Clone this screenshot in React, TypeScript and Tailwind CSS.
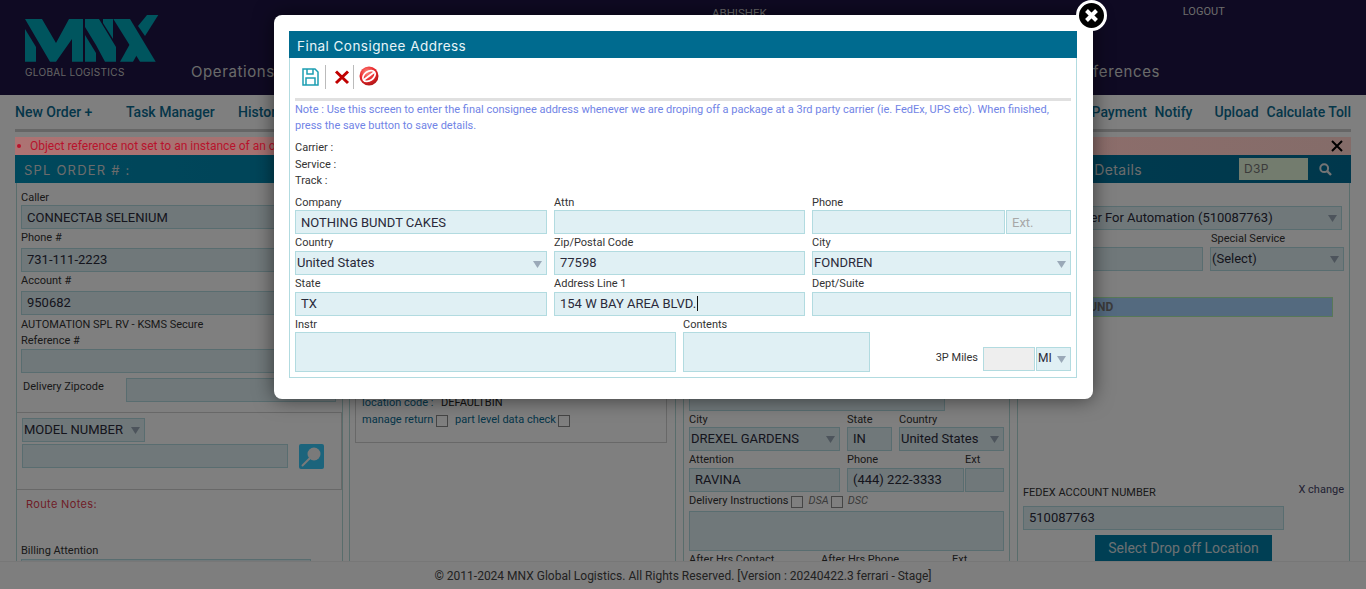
import React from "react";

const roboto = "font-['Roboto',sans-serif]";
const tech = "font-['Inter',sans-serif]";

function Arrow() {
  return (
    <svg width="9" height="7" viewBox="0 0 9 7" className="ml-auto shrink-0 mt-[1px]">
      <path d="M0 0h9L4.5 7z" fill="#9aa9b8" />
    </svg>
  );
}

function Field({ children, className = "", h = "h-[24px]" }: { children?: React.ReactNode; className?: string; h?: string }) {
  return (
    <div className={`${h} flex items-center border border-[#b2dbe0] bg-[#e0f0f4] pl-[5px] text-[13px] text-[#2a2a3a] whitespace-nowrap overflow-hidden ${className}`}>
      {children}
    </div>
  );
}

function Select({ children, className = "" }: { children?: React.ReactNode; className?: string }) {
  return (
    <div className={`h-[24px] flex items-center border border-[#b2dbe0] bg-[#e0f0f4] pl-[1px] pr-[4px] text-[13px] text-[#2a2a3a] whitespace-nowrap overflow-hidden ${className}`}>
      <span className="pb-[1px]">{children}</span>
      <Arrow />
    </div>
  );
}

function Label({ children, className = "", h = "h-[17px]" }: { children: React.ReactNode; className?: string; h?: string }) {
  return <div className={`${h} flex items-center text-[11px] text-[#333] whitespace-nowrap ${className}`}>{children}</div>;
}

function Check() {
  return <span className="inline-block w-[12px] h-[12px] shrink-0 border border-[#8a8a8a] bg-white" />;
}

function Logo() {
  return (
    <svg width="134" height="48" viewBox="0 0 134 48" className="block">
      <g fill="#00aabd">
        <polygon points="0,14 11,32 11,46.7 0,46.7" />
        <polygon points="0,4 17,4 31,28 44,4 58,4 58,46.7 47,46.7 47,24 31,46.7 25,46.7" />
        <polygon points="60,4 74,4 91,32 91,46.7 80,46.7 71,30 60,12" />
        <polygon points="60,20 71,38 71,46.7 60,46.7" />
        <polygon points="78,4 88,4 88,24 78,8" />
        <polygon points="88.3,4 105,4 130.7,46.7 115,46.7" />
        <polygon points="122,0 133.3,0 120,21 113,11" />
        <polygon points="95,46.7 108,46.7 117,31 110,20" />
      </g>
    </svg>
  );
}

function SearchGlass() {
  return (
    <svg width="25" height="25" viewBox="0 0 25 25" className="block">
      <rect width="25" height="25" rx="2" fill="#38c8f8" />
      <circle cx="15" cy="10" r="6.5" fill="#f4f4f4" />
      <path d="M10.5 14.5L3.5 21.5" stroke="#f4f4f4" strokeWidth="2" strokeLinecap="round" />
    </svg>
  );
}

export default function App() {
  return (
    <div className={`relative h-[589px] w-[1366px] overflow-hidden bg-white flex flex-col ${roboto}`}>
      {/* header */}
      <header className="h-[95px] shrink-0 bg-[#1e1446] flex">
        <div className="w-[191px] shrink-0 pl-[25px] pt-[15px]">
          <Logo />
          <div className={`mt-[2px] text-[10px] tracking-[0.3px] text-[#c8c8c8] ${tech}`}>GLOBAL LOGISTICS</div>
        </div>
        <div className="flex-1 flex flex-col">
          <div className="flex h-[24px] items-center text-[#d8d8d8]">
            <span className="ml-[521px] mt-[3px] text-[11.5px]">ABHISHEK</span>
            <span className="ml-[416px] text-[11px]">LOGOUT</span>
          </div>
          <div className={`mt-[37px] flex justify-between pr-[206px] text-[15px] tracking-[0.6px] text-[#d4d4d4] ${tech}`}>
            <span>Operations</span>
            <span>Preferences</span>
          </div>
        </div>
      </header>

      {/* toolbar */}
      <nav className="h-[34px] shrink-0 flex items-center justify-between px-[15px] pt-[1px] text-[14px] font-medium text-[#0a6c92]">
        <div className="flex">
          <span className="w-[111px]">New Order +</span>
          <span className="w-[112px]">Task Manager</span>
          <span>History</span>
        </div>
        <div className="flex">
          <span className="w-[63px]">Payment</span>
          <span className="w-[60px]">Notify</span>
          <span className="w-[52px]">Upload</span>
          <span>Calculate Toll</span>
        </div>
      </nav>
      <div className="mx-[15px] h-[3px] shrink-0 bg-[#cccccc]" />

      {/* error */}
      <div className="relative z-10 mx-[15px] mt-[5px] h-[18px] shrink-0 flex items-center bg-gradient-to-r from-[#ad7373] to-[#846c69] text-[12px] text-[#b8122c]">
        <span className="ml-[2px] w-[4px] h-[4px] rounded-full bg-[#b8122c]" />
        <span className="ml-[9px]">Object reference not set to an instance of an object.</span>
        <svg width="12" height="12" viewBox="0 0 12 12" className="block ml-auto mr-[8px]">
          <path d="M1 1L11 11M11 1L1 11" stroke="#000" strokeWidth="2" />
        </svg>
      </div>

      {/* section header */}
      <div className={`mx-[15px] h-[28px] shrink-0 flex items-center bg-gradient-to-r from-[#0090b8] to-[#006f98] text-[13px] tracking-[1.2px] text-[#d8d8d8] ${tech}`}>
        <span className="ml-[9px] pt-[3px]">SPL ORDER # :</span>
        <span className="ml-auto text-[14px] tracking-[0.4px]">Details</span>
        <div className="ml-[97px] h-[22px] w-[69px] bg-[#e6f8dc] pl-[5px] flex items-center text-[12px] tracking-[0.4px] text-[#777]">D3P</div>
        <svg width="13" height="13" viewBox="0 0 13 13" className="ml-[11px] mr-[19px]">
          <circle cx="5.2" cy="5.2" r="3.9" fill="none" stroke="#e8e8e8" strokeWidth="2" />
          <path d="M8.2 8.2L12 12" stroke="#e8e8e8" strokeWidth="2.4" />
        </svg>
      </div>

      {/* panels */}
      <main className="flex-1 min-h-0 overflow-hidden flex pl-[16px]">
        {/* left */}
        <section className="w-[327px] shrink-0 border-x border-[#b2dbd8]">
          <div className="px-[4px] pt-[7px]">
            <Label h="h-[15px]" className="pt-[2px]">Caller</Label>
            <Field className="pt-[2px]">CONNECTAB SELENIUM</Field>
            <Label h="h-[19px]">Phone #</Label>
            <Field>731-111-2223</Field>
            <Label h="h-[19px]">Account #</Label>
            <Field>950682</Field>
            <Label className="pt-[4px]">AUTOMATION SPL RV - KSMS Secure</Label>
            <Label className="pt-[2px]">Reference #</Label>
            <Field />
            <div className="mt-[5px] flex">
              <Label className="ml-[2px] w-[103px] self-start pt-[2px]">Delivery Zipcode</Label>
              <Field className="w-[210px]" />
            </div>
          </div>
          <div className="mt-[10px] h-[78px] border-y border-r border-[#d0d0d0] px-[5px] pt-[5px] flex flex-col">
            <Select className="w-[123px]">MODEL NUMBER</Select>
            <div className="mt-[2px] flex items-start">
              <Field className="w-[266px]" />
              <div className="ml-[11px]">
                <SearchGlass />
              </div>
            </div>
          </div>
          <div className={`ml-[9px] mt-[6px] text-[11px] tracking-[0.35px] text-[#e04050] ${tech}`}>Route Notes:</div>
          <Label className="ml-[4px] mt-[28px] pt-[4px]" h="h-[18px]">Billing Attention</Label>
          <Field className="ml-[4px] w-[290px]" />
        </section>

        {/* middle */}
        <section className="ml-[6px] w-[327px] shrink-0 border-x border-[#b2dbd8] px-[5px] pt-[7px]">
          <div className="h-[253px] w-[312px] border border-[#d0d0d0] px-[6px] pb-[13px] flex flex-col justify-end text-[11px] whitespace-nowrap">
            <div className="h-[17px] flex items-center">
              <span className="w-[79px] text-[#0a6c92]">location code :</span>
              <span className="text-[#222]">DEFAULTBIN</span>
            </div>
            <div className="h-[17px] flex items-center text-[#0a6c92]">
              <span className="w-[74px] shrink-0">manage return</span>
              <Check />
              <span className="ml-[7px] w-[103px] shrink-0">part level data check</span>
              <Check />
            </div>
          </div>
        </section>

        {/* third */}
        <section className="ml-[7px] w-[327px] shrink-0 border-x border-[#b2dbd8] px-[5px] pt-[204px]">
          <Field className="w-[256px]" />
          <div className="grid grid-cols-[151px_45px_105px] gap-x-[7px]">
            <Label h="h-[16px]" className="pt-[2px]">City</Label>
            <Label h="h-[16px]" className="pt-[2px]">State</Label>
            <Label h="h-[16px]" className="pt-[2px]">Country</Label>
            <Select>DREXEL GARDENS</Select>
            <Field>IN</Field>
            <Select>United States</Select>
          </div>
          <div className="grid grid-cols-[151px_117px_39px] gap-x-[7px]">
            <Label className="pt-[2px]">Attention</Label>
            <Label className="pt-[2px]">Phone</Label>
            <Label className="-ml-[6px] pt-[2px]">Ext</Label>
            <Field>RAVINA</Field>
            <Field>(444) 222-3333</Field>
            <Field className="-ml-[6px] w-[39px]" />
          </div>
          <Label h="h-[19px]">
            <span>Delivery Instructions</span>
            <span className="ml-[3px] flex items-center"><Check /></span>
            <span className="ml-[5px] italic text-[#777]">DSA</span>
            <span className="ml-[2px] flex items-center"><Check /></span>
            <span className="ml-[5px] italic text-[#777]">DSC</span>
          </Label>
          <Field h="h-[40px]" className="w-[315px]" />
          <div className="flex">
            <Label className="w-[132px] pt-[2px]">After Hrs Contact</Label>
            <Label className="w-[131px] pt-[2px]">After Hrs Phone</Label>
            <Label className="pt-[2px]">Ext</Label>
          </div>
        </section>

        {/* right */}
        <section className="ml-[7px] w-[333px] shrink-0 border-x border-[#b2dbd8] px-[5px] pt-[23px]">
          <Select className="w-[319px]">
            <span className="ml-[38px]">Carrier For Automation (510087763)</span>
          </Select>
          <div className="flex">
            <div className="w-[187px] pt-[17px]">
              <Field className="w-[180px]" />
            </div>
            <div>
              <Label h="h-[17px]" className="ml-[1px] pt-[2px]">Special Service</Label>
              <Select className="w-[134px]">(Select)</Select>
            </div>
          </div>
          <div className="mt-[26px] h-[20px] w-[310px] flex items-center border border-[#b0f0b0] bg-[#a8d4ff] pl-[41px] text-[12px] font-bold text-[#777]">GROUND</div>
          <div className="mt-[166px] flex justify-between items-start w-[321px]">
            <Label h="h-[17px]" className="mt-[1px] pt-[2px] uppercase">Fedex Account Number</Label>
            <span className="-mt-[1px] text-[11px] text-[#446]">X change</span>
          </div>
          <Field className="mt-[5px] w-[261px]">510087763</Field>
          <div className="mt-[5px] ml-[72px] h-[26px] w-[177px] flex items-center justify-center bg-[#007ea8] text-[14px] text-[#d8e0e4]">Select Drop off Location</div>
        </section>
      </main>

      <footer className="h-[28px] shrink-0 flex items-center justify-center border-t border-[#eeeeee] bg-[#fcfcfc] text-[12px] text-[#444]">
        © 2011-2024 MNX Global Logistics. All Rights Reserved. [Version : 20240422.3 ferrari - Stage]
      </footer>

      {/* overlay */}
      <div className="absolute inset-0 bg-black/50" />

      {/* modal */}
      <div className="absolute z-20 left-[274px] top-[15px] w-[819px] h-[384px] rounded-[8px] bg-white shadow-[0_0_20px_rgba(0,0,0,0.55)] pt-[16px] pl-[15px] pr-[16px]">
        <div className={`h-[27px] bg-[#006b8f] flex items-center pl-[8px] pt-[3px] text-[13.5px] tracking-[0.45px] text-[#e8f4f8] ${tech}`}>Final Consignee Address</div>
        <div className="h-[320px] border border-t-0 border-[#b2dbe0] px-[5px]">
          <div className="h-[40px] flex items-center pb-[2px]">
            <svg width="17" height="18" viewBox="0 0 17 18" className="ml-[7px]" fill="none" stroke="#1d9fb3" strokeWidth="1.5">
              <path d="M1 1h12l3 3v13H1z" />
              <path d="M5 1v5h6V1" />
              <path d="M4 17v-7h9v7" />
            </svg>
            <span className="ml-[6px] h-[24px] w-px bg-[#bbb]" />
            <svg width="16" height="16" viewBox="0 0 16 16" className="ml-[8px]">
              <path d="M2 2.5L14 14M14 2.5L2 14" stroke="#c00000" strokeWidth="3" />
            </svg>
            <span className="ml-[3px] h-[24px] w-px bg-[#bbb]" />
            <svg width="20" height="20" viewBox="0 0 20 20" className="ml-[5px] -mt-[2px]">
              <defs>
                <radialGradient id="stopRed" cx="40%" cy="30%" r="75%">
                  <stop offset="0" stopColor="#ff8a80" />
                  <stop offset="0.55" stopColor="#e8262a" />
                  <stop offset="1" stopColor="#a81414" />
                </radialGradient>
              </defs>
              <circle cx="10" cy="10" r="9.5" fill="url(#stopRed)" />
              <ellipse cx="10" cy="10" rx="6.8" ry="4.6" transform="rotate(-35 10 10)" fill="none" stroke="#fff" strokeWidth="1.7" />
              <path d="M4.6 14L15.4 6" stroke="#fff" strokeWidth="2" />
            </svg>
          </div>
          <div className="h-[3px] bg-[#e0e0e0]" />
          <div className="pt-[1px] text-[11px] leading-[16px] text-[#7184e6]">
            Note : Use this screen to enter the final consignee address whenever we are droping off a package at a 3rd party carrier (ie. FedEx, UPS etc). When finished, press the save button to save details.
          </div>
          <div className="mt-[6px] text-[11px] leading-[16.5px] text-[#333]">
            <div>Carrier :</div>
            <div>Service :</div>
            <div>Track :</div>
          </div>
          <div className="mt-[3px] grid grid-cols-[252px_251px_259px] gap-x-[7px]">
            <Label className="pt-[4px]">Company</Label>
            <Label className="pt-[4px]">Attn</Label>
            <Label className="pt-[4px]">Phone</Label>
            <Field className="pt-[2px]">NOTHING BUNDT CAKES</Field>
            <Field />
            <div className="flex gap-[1px]">
              <Field className="w-[193px]" />
              <Field className="flex-1 text-[#a8a8a8] pt-[2px]">Ext.</Field>
            </div>
            <Label className="pt-[2px]">Country</Label>
            <Label className="pt-[2px]">Zip/Postal Code</Label>
            <Label className="pt-[2px]">City</Label>
            <Select className="pt-[2px]">United States</Select>
            <Field>77598</Field>
            <Select className="pt-[2px]">FONDREN</Select>
            <Label className="pt-[2px]">State</Label>
            <Label className="pt-[2px]">Address Line 1</Label>
            <Label className="pt-[2px]">Dept/Suite</Label>
            <Field>TX</Field>
            <Field>
              154 W BAY AREA BLVD.
              <span className="ml-[1px] inline-block h-[15px] w-px bg-[#111]" />
            </Field>
            <Field />
          </div>
          <div className="flex">
            <div className="w-[381px]">
              <Label h="h-[16px]" className="pt-[3px]">Instr</Label>
              <Field h="h-[40px]" />
            </div>
            <div className="ml-[7px] w-[187px]">
              <Label h="h-[16px]" className="pt-[3px]">Contents</Label>
              <Field h="h-[40px]" />
            </div>
            <div className="flex-1 flex items-end justify-end pb-[1px]">
              <div className="flex items-center">
                <span className="text-[11px] text-[#333] mr-[5px]">3P Miles</span>
                <div className="h-[24px] w-[52px] border border-[#b2dbe0] bg-[#eeeeee]" />
                <Select className="ml-[1px] w-[35px]">
                  <span className="text-[12px]">MI</span>
                </Select>
              </div>
            </div>
          </div>
        </div>
      </div>

      {/* close */}
      <div className="absolute z-30 left-[1076px] top-0 w-[31px] h-[31px] rounded-full bg-black border-[3px] border-white flex items-center justify-center">
        <svg width="15" height="13" viewBox="0 0 15 13">
          <path d="M2.5 1.5L12.5 11.5M12.5 1.5L2.5 11.5" stroke="#fff" strokeWidth="4" />
        </svg>
      </div>
    </div>
  );
}
